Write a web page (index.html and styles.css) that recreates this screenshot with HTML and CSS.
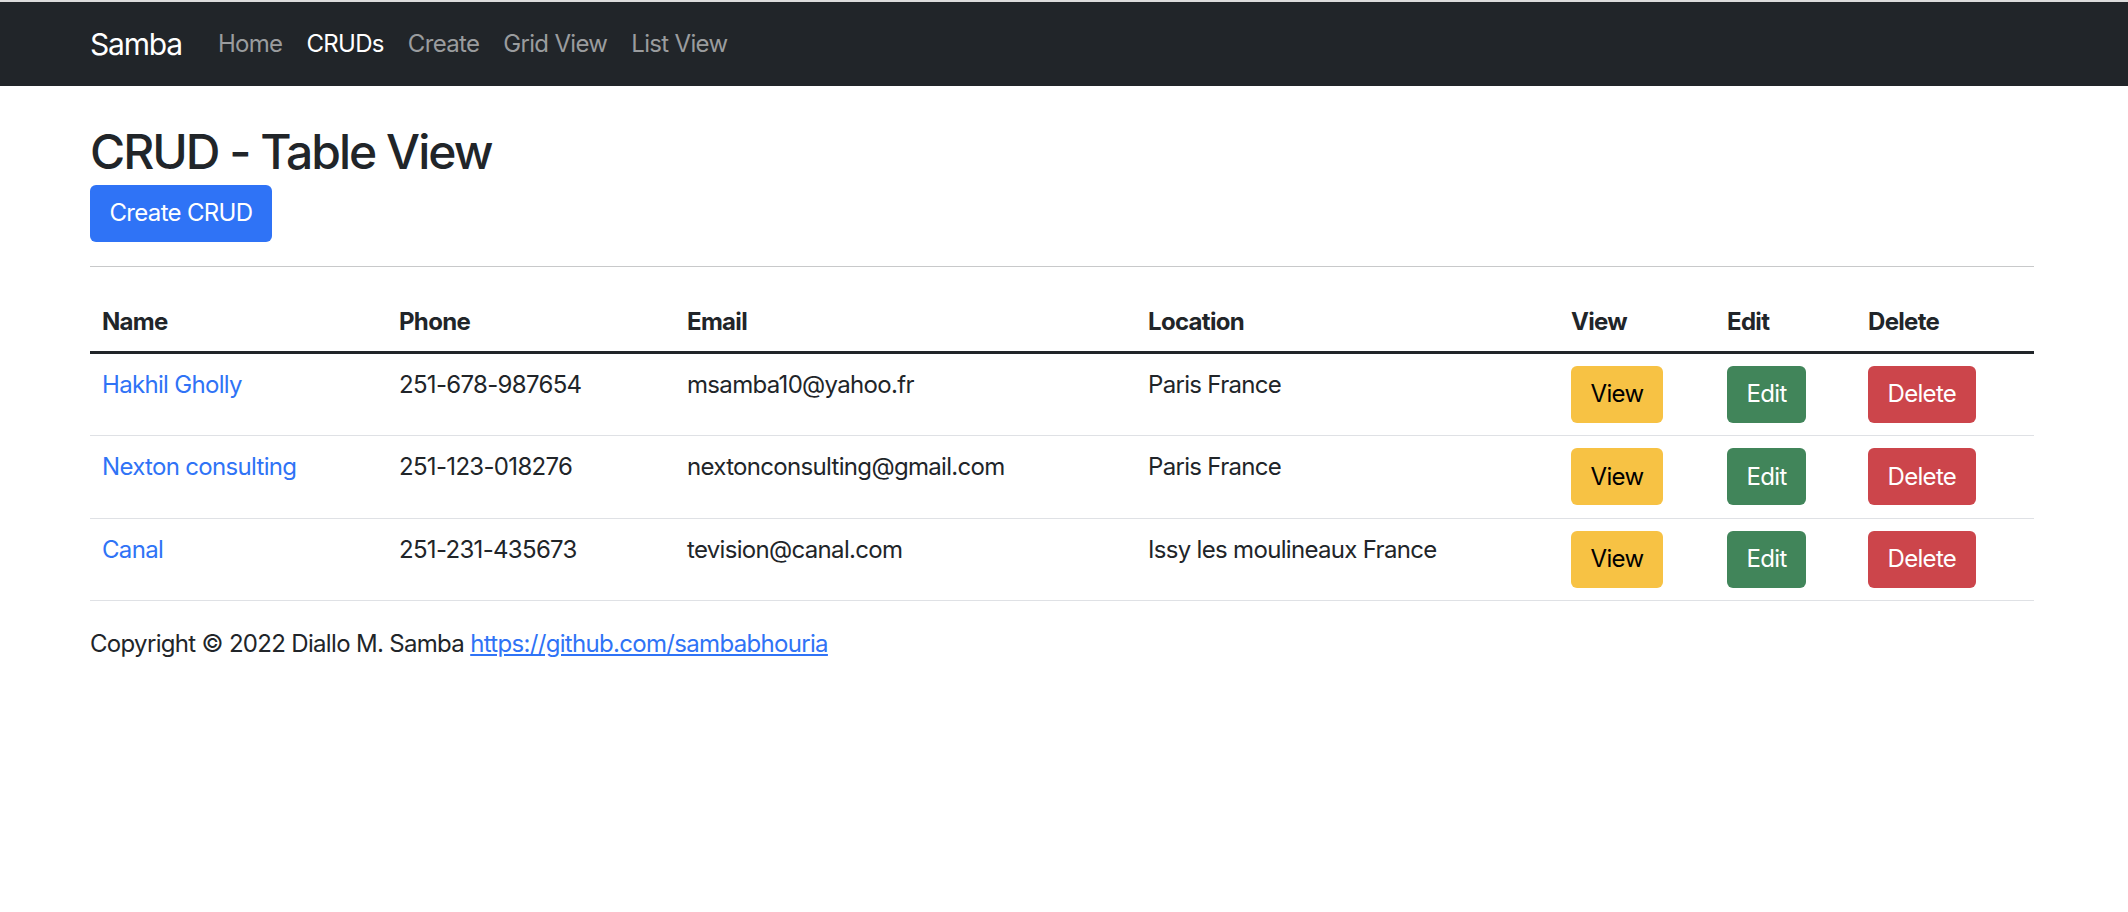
FILE: index.html
```html
<!DOCTYPE html>
<html lang="en">
<head>
<meta charset="utf-8">
<title>CRUD - Table View</title>
<link rel="stylesheet" href="styles.css">
</head>
<body>
<nav class="navbar">
  <div class="container nav-inner">
    <a class="brand" href="#">Samba</a>
    <ul class="nav-links">
      <li><a class="nav-link" href="#">Home</a></li>
      <li><a class="nav-link active" href="#">CRUDs</a></li>
      <li><a class="nav-link" href="#">Create</a></li>
      <li><a class="nav-link" href="#">Grid View</a></li>
      <li><a class="nav-link" href="#">List View</a></li>
    </ul>
  </div>
</nav>
<main class="container">
  <h2 class="page-title">CRUD - Table View</h2>
  <a class="btn btn-primary" href="#">Create CRUD</a>
  <hr class="divider">
  <table class="table">
    <thead>
      <tr>
        <th class="col-name">Name</th>
        <th class="col-phone">Phone</th>
        <th class="col-email">Email</th>
        <th class="col-location">Location</th>
        <th class="col-view">View</th>
        <th class="col-edit">Edit</th>
        <th class="col-delete">Delete</th>
      </tr>
    </thead>
    <tbody>
      <tr>
        <td><a class="link" href="#">Hakhil Gholly</a></td>
        <td>251-678-987654</td>
        <td>msamba10@yahoo.fr</td>
        <td>Paris France</td>
        <td><a class="btn btn-warning" href="#">View</a></td>
        <td><a class="btn btn-success" href="#">Edit</a></td>
        <td><a class="btn btn-danger" href="#">Delete</a></td>
      </tr>
      <tr>
        <td><a class="link" href="#">Nexton consulting</a></td>
        <td>251-123-018276</td>
        <td>nextonconsulting@gmail.com</td>
        <td>Paris France</td>
        <td><a class="btn btn-warning" href="#">View</a></td>
        <td><a class="btn btn-success" href="#">Edit</a></td>
        <td><a class="btn btn-danger" href="#">Delete</a></td>
      </tr>
      <tr>
        <td><a class="link" href="#">Canal</a></td>
        <td>251-231-435673</td>
        <td>tevision@canal.com</td>
        <td>Issy les moulineaux France</td>
        <td><a class="btn btn-warning" href="#">View</a></td>
        <td><a class="btn btn-success" href="#">Edit</a></td>
        <td><a class="btn btn-danger" href="#">Delete</a></td>
      </tr>
    </tbody>
  </table>
  <footer class="footer">
    Copyright © 2022 Diallo M. Samba <a class="footer-link" href="#">https://github.com/sambabhouria</a>
  </footer>
</main>
</body>
</html>
```

FILE: styles.css
```css
* { box-sizing: border-box; }

html, body {
  margin: 0;
  padding: 0;
  background: #ffffff;
}

body {
  border-top: 2px solid #dcdcdc;
  font-family: Inter, "Liberation Sans", sans-serif;
  font-size: 24px;
  line-height: 36px;
  letter-spacing: -0.68px;
  color: #212529;
}

.container {
  width: 1948px;
  margin: 0 auto;
  padding-right: 4px;
}

/* Navbar */
.navbar {
  background: #212529;
  padding: 12px 0;
}

.nav-inner {
  display: flex;
  align-items: center;
}

.brand {
  font-size: 30px;
  line-height: 45px;
  letter-spacing: -1.2px;
  padding: 7.5px 0;
  margin-right: 24px;
  color: #ffffff;
  text-decoration: none;
}

.nav-links {
  display: flex;
  list-style: none;
  margin: 0;
  padding: 0;
}

.nav-link {
  display: block;
  padding: 12px;
  color: #9a9c9e;
  text-decoration: none;
}

.nav-link.active {
  color: #ffffff;
}

/* Heading */
.page-title {
  font-size: 48px;
  line-height: 57.6px;
  font-weight: 500;
  letter-spacing: -2px;
  margin: 37px 0 4.4px;
  color: #212529;
}

/* Buttons */
.btn {
  display: inline-block;
  padding: 10.5px 19.5px;
  border-radius: 6px;
  font-size: 24px;
  line-height: 36px;
  text-decoration: none;
  vertical-align: top;
}

.btn-primary { background: #2f73f6; color: #ffffff; }
.btn-warning { background: #f7c244; color: #000000; }
.btn-success { background: #41855a; color: #ffffff; }
.btn-danger  { background: #cc454b; color: #ffffff; }

.divider {
  border: 0;
  border-top: 1px solid #c8c9ca;
  margin: 24px 0;
}

/* Table */
.table {
  width: 100%;
  table-layout: fixed;
  border-collapse: collapse;
  margin-bottom: 24px;
}

.table th,
.table td {
  text-align: left;
  vertical-align: top;
  padding: 13px 12px 12.5px;
}

.table th {
  font-weight: 700;
  padding-bottom: 11px;
}

.table thead tr {
  border-bottom: 3px solid #212529;
}

.table tbody tr {
  border-bottom: 1px solid #dfe1e5;
}

.table td .btn {
  margin-top: -1px;
}

.col-name { width: 297px; }
.col-phone { width: 288px; }
.col-email { width: 461px; }
.col-location { width: 423px; }
.col-view { width: 156px; }
.col-edit { width: 141px; }
.col-delete { width: 178px; }

.link {
  color: #2f73f6;
  text-decoration: none;
}

/* Footer */
.footer {
  padding-top: 1px;
  color: #212529;
}

.footer-link {
  color: #2f73f6;
  text-decoration: underline;
}
```
